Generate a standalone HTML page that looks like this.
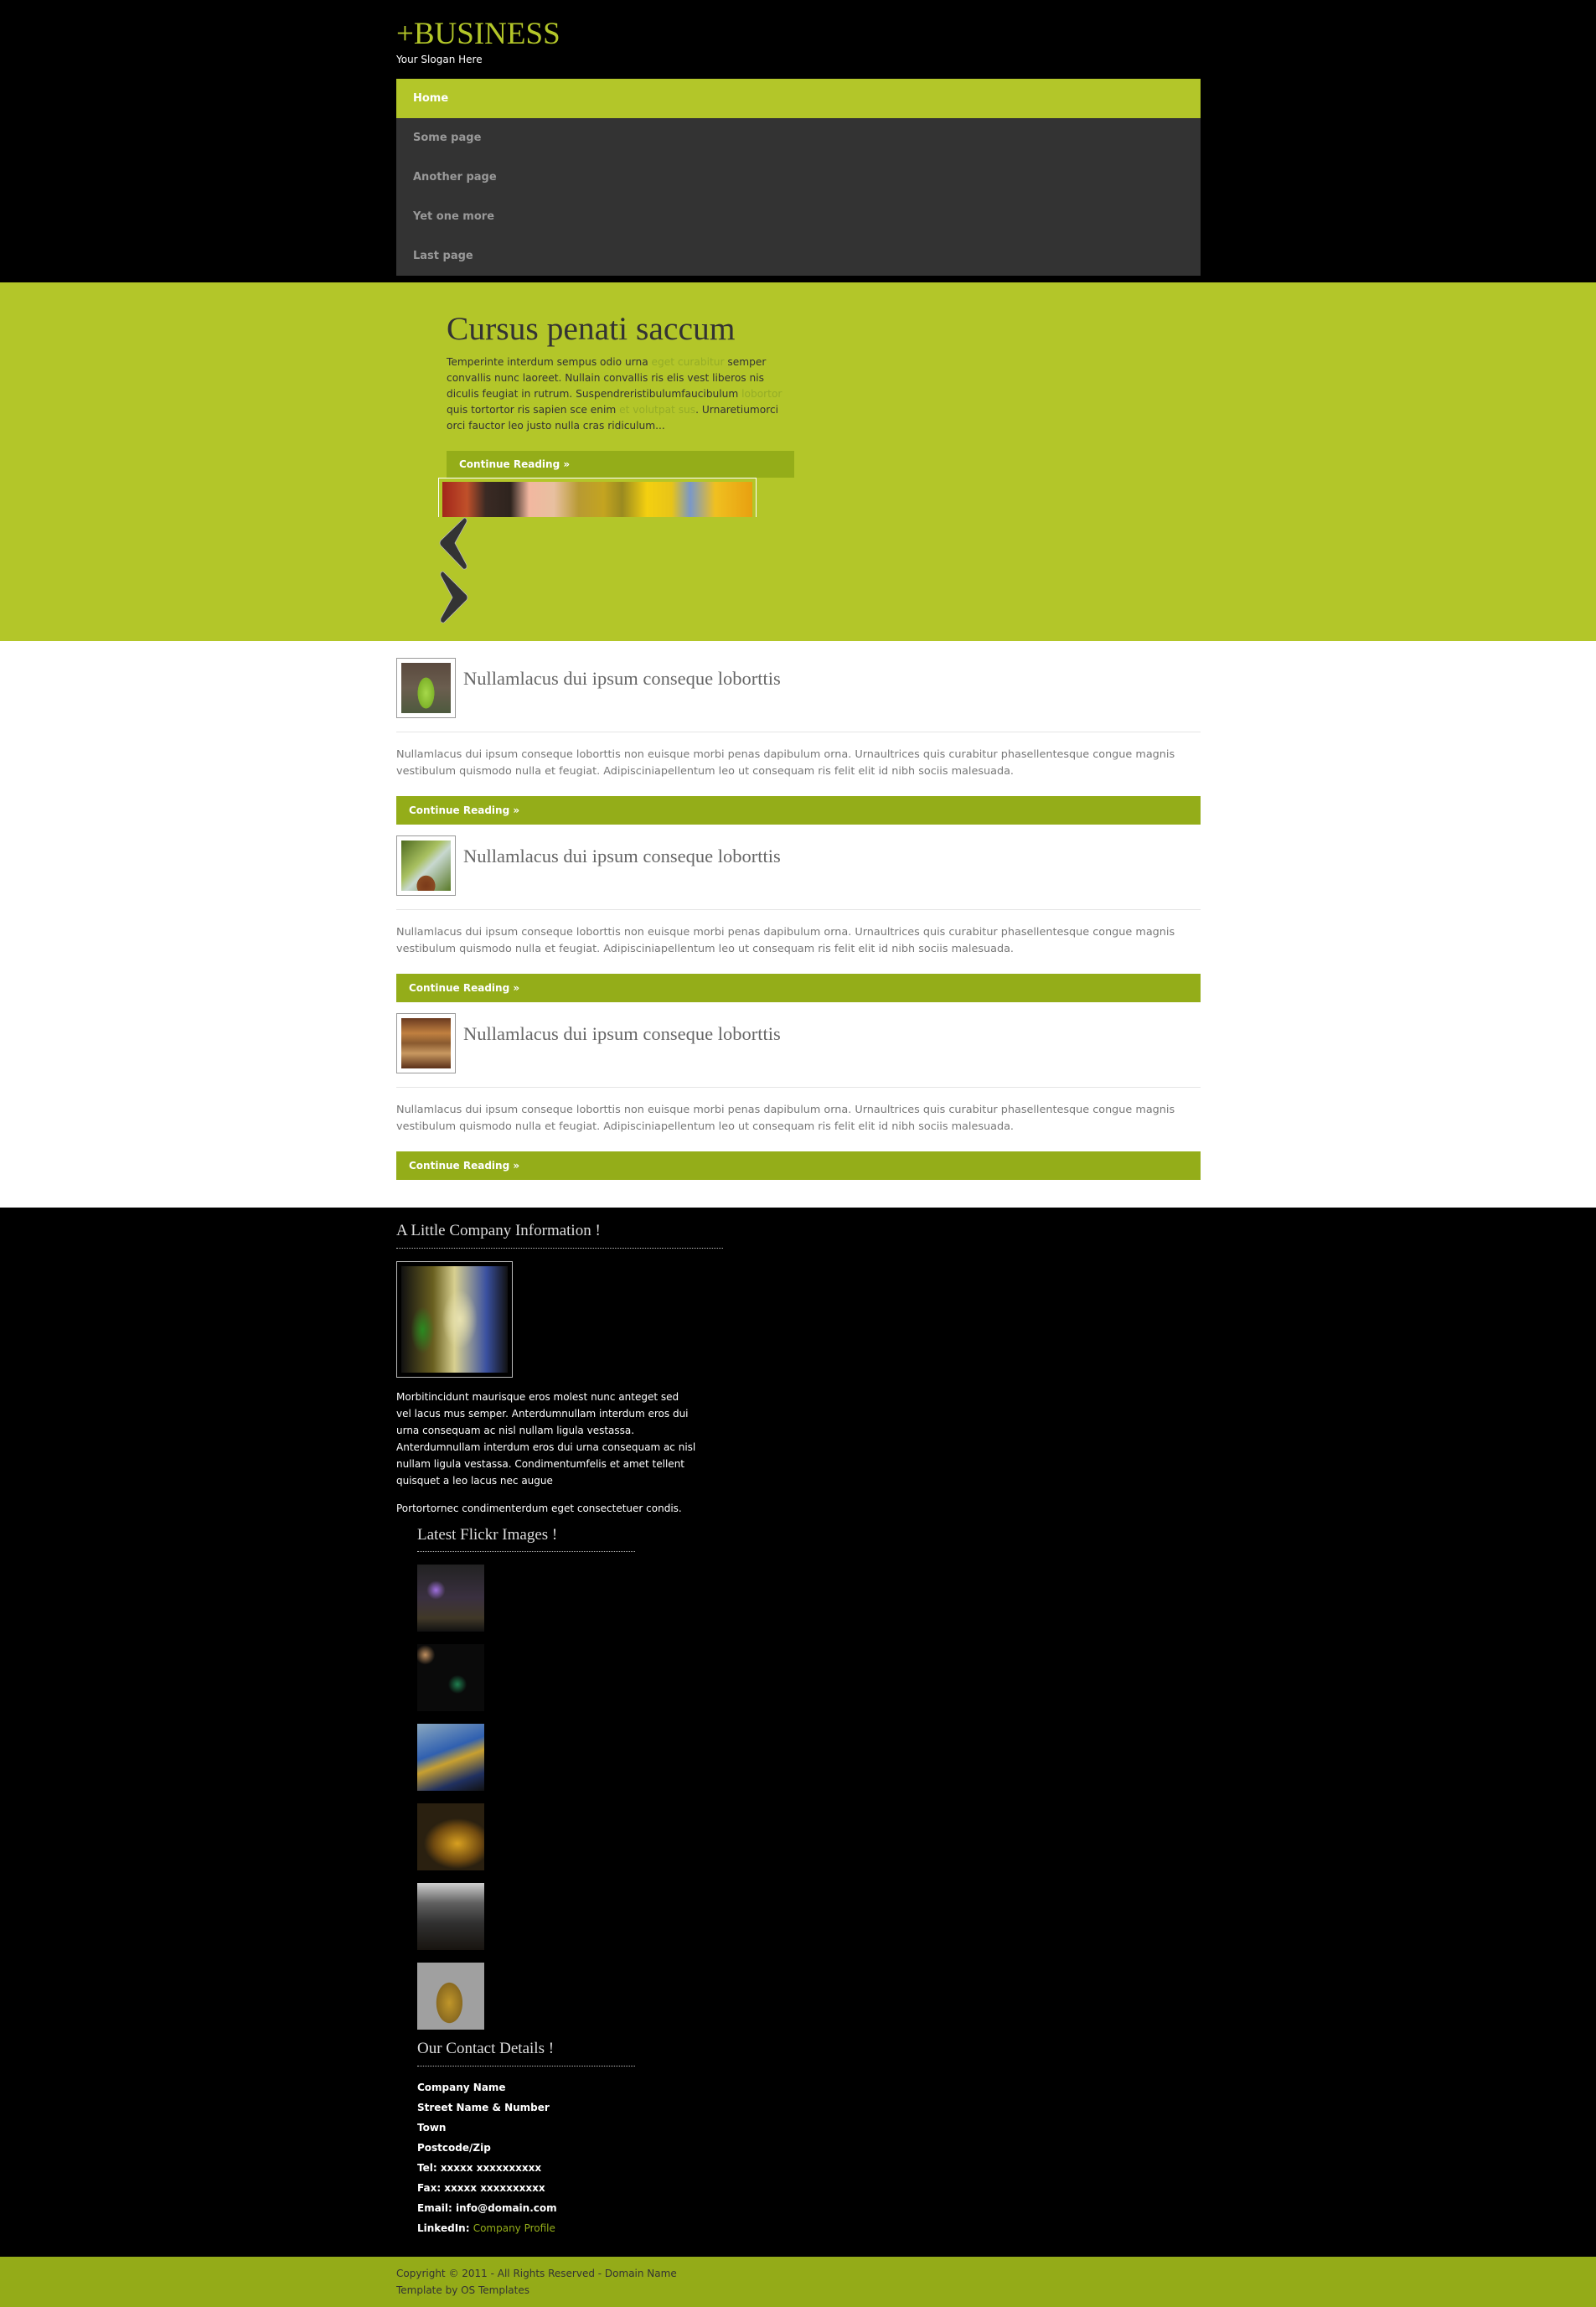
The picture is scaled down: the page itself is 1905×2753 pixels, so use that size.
<!DOCTYPE html>
<html><head><meta charset="utf-8">
<style>
*{margin:0;padding:0;box-sizing:border-box}
html,body{width:1905px;height:2753px;background:#000;overflow:hidden}
body{position:relative;font-family:"DejaVu Sans","Liberation Sans",sans-serif}
.a{position:absolute}
.serif{font-family:"Liberation Serif","DejaVu Serif",serif}
.menu div{height:47px;line-height:47px;padding-left:20px;font-size:13px;font-weight:bold;color:#999;background:#333}
.menu div.on{background:#b3c629;color:#fff}
.btn{background:#94ad19;color:#fff;font-weight:bold;font-size:12px;line-height:32px;padding-left:15px}
.thumb{width:71px;height:72px;border:1px solid #999;background:#fff;padding:5px}
.thumb div{width:59px;height:60px}
.ph{font-size:22.5px;color:#666}
.pp{font-size:12.8px;color:#777;line-height:20px;width:960px}
.hr{height:1px;background:#e5e5e5;width:960px}
.fh{font-size:19px;color:#ddd}
.dot{border-top:1px dotted #bbb;height:1px}
.ft{color:#fff;font-size:12px;line-height:20px;white-space:nowrap}
.fl{width:80px;height:80px}
.ct{color:#fff;font-size:12px;font-weight:bold;line-height:24px}
</style></head><body>
<!-- header -->
<div class="a serif" style="left:473px;top:19px;font-size:37px;color:#b3c629;line-height:44px">+BUSINESS</div>
<div class="a" style="left:473px;top:64px;font-size:12px;color:#fff">Your Slogan Here</div>
<div class="a menu" style="left:473px;top:94px;width:960px">
<div class="on">Home</div><div>Some page</div><div>Another page</div><div>Yet one more</div><div>Last page</div>
</div>
<!-- banner -->
<div class="a" style="left:0;top:337px;width:1905px;height:428px;background:#b3c629"></div>
<div class="a serif" style="left:533px;top:369px;font-size:39.5px;color:#333;line-height:46px">Cursus penati saccum</div>
<div class="a" style="left:533px;top:423px;width:420px;font-size:12.2px;line-height:19px;color:#333">Temperinte interdum sempus odio urna <span style="color:#95ad27">eget curabitur</span> semper convallis nunc laoreet. Nullain convallis ris elis vest liberos nis diculis feugiat in rutrum. Suspendreristibulumfaucibulum <span style="color:#95ad27">lobortor</span> quis tortortor ris sapien sce enim <span style="color:#95ad27">et volutpat sus</span>. Urnaretiumorci orci fauctor leo justo nulla cras ridiculum...</div>
<div class="a btn" style="left:533px;top:538px;width:415px;height:32px">Continue Reading &raquo;</div>
<div class="a" style="left:523px;top:570px;width:380px;height:47px;border:1px solid #fff;border-bottom:none;padding:4px 4px 0 4px">
<div style="width:100%;height:100%;background:linear-gradient(90deg,#a3261a 0%,#c0502a 8%,#3a2a24 14%,#2e241e 22%,#f2b7a0 28%,#e8c0a0 36%,#b89a32 44%,#c4a420 52%,#9a8a20 58%,#f4d010 66%,#e8c418 74%,#7a98c8 80%,#f0c020 88%,#e8a010 100%)"></div></div>
<svg class="a" style="left:522px;top:616px" width="40" height="132" viewBox="0 0 40 132">
<path d="M32 2 Q36 2 35 7 L21 32 L35 58 Q36 64 31 63 L4 35 Q2 32 4 29 Z" fill="#333" stroke="#bbb" stroke-width="0.8"/>
<path d="M7 66 Q3 66 4 71 L18 97 L4 122 Q3 128 8 127 L35 100 Q37 97 35 94 Z" fill="#333" stroke="#bbb" stroke-width="0.8"/>
</svg>
<!-- content -->
<div class="a" style="left:0;top:765px;width:1905px;height:676px;background:#fff"></div>

<div class="a thumb" style="left:473px;top:785px"><div style="background:radial-gradient(ellipse 14px 26px at 50% 60%,#a6d84a 0%,#7fb32a 70%,transparent 72%),linear-gradient(#5a4a3e,#6b5e4f 50%,#4e5a3e)"></div></div>
<div class="a serif ph" style="left:553px;top:797px">Nullamlacus dui ipsum conseque loborttis</div>
<div class="a hr" style="left:473px;top:873px"></div>
<div class="a pp" style="left:473px;top:891px">Nullamlacus dui ipsum conseque loborttis non euisque morbi penas dapibulum orna. Urnaultrices quis curabitur phasellentesque congue magnis vestibulum quismodo nulla et feugiat. Adipisciniapellentum leo ut consequam ris felit elit id nibh sociis malesuada.</div>
<div class="a btn" style="left:473px;top:950px;width:960px;height:34px;line-height:34px">Continue Reading &raquo;</div>

<div class="a thumb" style="left:473px;top:997px"><div style="background:radial-gradient(ellipse 18px 20px at 50% 90%,#7a3a1a 0%,#8a4a22 60%,transparent 62%),linear-gradient(135deg,#4e6a20,#a8c060 40%,#c8d8d0 55%,#5a7a28)"></div></div>
<div class="a serif ph" style="left:553px;top:1009px">Nullamlacus dui ipsum conseque loborttis</div>
<div class="a hr" style="left:473px;top:1085px"></div>
<div class="a pp" style="left:473px;top:1103px">Nullamlacus dui ipsum conseque loborttis non euisque morbi penas dapibulum orna. Urnaultrices quis curabitur phasellentesque congue magnis vestibulum quismodo nulla et feugiat. Adipisciniapellentum leo ut consequam ris felit elit id nibh sociis malesuada.</div>
<div class="a btn" style="left:473px;top:1162px;width:960px;height:34px;line-height:34px">Continue Reading &raquo;</div>

<div class="a thumb" style="left:473px;top:1209px"><div style="background:linear-gradient(180deg,#6a3a20,#c08040 30%,#8a5a30 50%,#c89860 70%,#5a3018)"></div></div>
<div class="a serif ph" style="left:553px;top:1221px">Nullamlacus dui ipsum conseque loborttis</div>
<div class="a hr" style="left:473px;top:1297px"></div>
<div class="a pp" style="left:473px;top:1315px">Nullamlacus dui ipsum conseque loborttis non euisque morbi penas dapibulum orna. Urnaultrices quis curabitur phasellentesque congue magnis vestibulum quismodo nulla et feugiat. Adipisciniapellentum leo ut consequam ris felit elit id nibh sociis malesuada.</div>
<div class="a btn" style="left:473px;top:1374px;width:960px;height:34px;line-height:34px">Continue Reading &raquo;</div>

<!-- footer -->
<div class="a serif fh" style="left:473px;top:1458px">A Little Company Information !</div>
<div class="a dot" style="left:473px;top:1489px;width:390px"></div>
<div class="a" style="left:473px;top:1505px;width:139px;height:139px;border:1px solid #bbb;padding:5px"><div style="width:100%;height:100%;background:radial-gradient(ellipse 30px 50px at 55% 50%,#e8e2b0,transparent 70%),radial-gradient(ellipse 20px 40px at 20% 60%,#2a8a20,transparent 70%),linear-gradient(90deg,#111,#6a6020 30%,#d8d090 50%,#3a50a0 80%,#111)"></div></div>
<div class="a ft" style="left:473px;top:1657px">Morbitincidunt maurisque eros molest nunc anteget sed<br>vel lacus mus semper. Anterdumnullam interdum eros dui<br>urna consequam ac nisl nullam ligula vestassa.<br>Anterdumnullam interdum eros dui urna consequam ac nisl<br>nullam ligula vestassa. Condimentumfelis et amet tellent<br>quisquet a leo lacus nec augue</div>
<div class="a ft" style="left:473px;top:1790px">Portortornec condimenterdum eget consectetuer condis.</div>
<div class="a serif fh" style="left:498px;top:1821px">Latest Flickr Images !</div>
<div class="a dot" style="left:498px;top:1851px;width:260px"></div>
<div class="a fl" style="left:498px;top:1867px;background:radial-gradient(circle 14px at 28% 38%,#a070e0,transparent 80%),linear-gradient(#222,#3a3040 50%,#403828 80%,#111)"></div>
<div class="a fl" style="left:498px;top:1962px;background:radial-gradient(circle 13px at 12% 16%,#c09060,transparent 90%),radial-gradient(circle 14px at 60% 60%,#208050,transparent 80%),#0a0a0a"></div>
<div class="a fl" style="left:498px;top:2057px;background:linear-gradient(160deg,#8aa8c0,#3060b0 40%,#c8a030 55%,#203060 80%,#111)"></div>
<div class="a fl" style="left:498px;top:2152px;background:radial-gradient(ellipse 40px 30px at 60% 60%,#d8a020,#704a10 70%,#2a2010)"></div>
<div class="a fl" style="left:498px;top:2247px;background:linear-gradient(#d0d0d0,#606060 30%,#303030 60%,#181410)"></div>
<div class="a fl" style="left:498px;top:2342px;background:radial-gradient(ellipse 22px 34px at 48% 60%,#c0962a,#8a6a20 70%,transparent 72%),#a0a0a0"></div>
<div class="a serif fh" style="left:498px;top:2434px">Our Contact Details !</div>
<div class="a dot" style="left:498px;top:2465px;width:260px"></div>
<div class="a ct" style="left:498px;top:2479px">Company Name<br>Street Name &amp; Number<br>Town<br>Postcode/Zip<br>Tel: xxxxx xxxxxxxxxx<br>Fax: xxxxx xxxxxxxxxx<br>Email: info@domain.com<br>LinkedIn: <span style="color:#94ad19;font-weight:normal">Company Profile</span></div>
<div class="a" style="left:0;top:2693px;width:1905px;height:60px;background:#94ab18"></div>
<div class="a" style="left:473px;top:2703px;font-size:12px;line-height:20px;color:#333">Copyright &copy; 2011 - All Rights Reserved - Domain Name<br>Template by OS Templates</div>
</body></html>
